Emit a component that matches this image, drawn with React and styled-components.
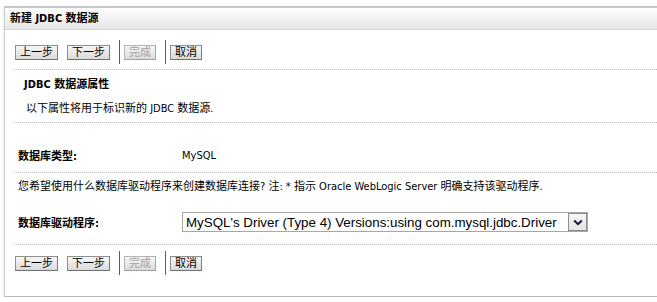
import React from "react";
import styled, { createGlobalStyle } from "styled-components";

const Global = createGlobalStyle`
  html, body { margin: 0; padding: 0; background: #fff; }
  body {
    font-family: Tahoma, "DejaVu Sans Condensed", "Liberation Sans", "Noto Sans CJK SC", sans-serif;
    font-size: 11px;
    color: #000;
  }
`;

const Panel = styled.div`
  margin: 6px 0 0 4px;
  border-top: 2px solid #c3c8cc;
  border-left: 1px solid #cdd0d2;
  border-bottom: 1px solid #b8b8b8;
  box-shadow: 0 2px 1px #a8a8a8;
  padding-bottom: 21px;
`;

const TitleBar = styled.div`
  height: 21px;
  line-height: 21px;
  padding-left: 5px;
  background: linear-gradient(to bottom, #ffffff 0%, #f3f3f3 45%, #e6e6e6 100%);
  border-bottom: 1px solid #d6d6d6;
  font-weight: bold;
  font-size: 11px;
`;

const Content = styled.div`
  padding-left: 9px;
`;

const Section = styled.div`
  padding: ${(p) => p.$pt || 0}px 0 ${(p) => p.$pb || 0}px;
  border-bottom: ${(p) => (p.$noline ? "none" : "1px dotted #b9b9b9")};
`;

const ButtonBar = styled.div`
  display: flex;
  align-items: center;
  height: 24px;
  padding-left: 1px;
`;

const Button = styled.button`
  height: 15px;
  padding: 0 4px;
  margin: 0 9px 0 0;
  font-family: inherit;
  font-size: 11px;
  line-height: 13px;
  color: ${(p) => (p.disabled ? "#a3a3a3" : "#000")};
  background: linear-gradient(to bottom, #f6f6f6 0%, #e9e9e9 50%, #dadada 100%);
  border: 1px solid ${(p) => (p.disabled ? "#b4b4b4" : "#8f8f8f")};
  border-bottom-color: ${(p) => (p.disabled ? "#a0a0a0" : "#6f6f6f")};
  border-right-color: ${(p) => (p.disabled ? "#a8a8a8" : "#7a7a7a")};
  border-radius: 0;
  cursor: default;
`;

const Separator = styled.span`
  width: 1px;
  height: 24px;
  background: #5e5e5e;
  margin-right: 4px;
`;

const Heading = styled.div`
  font-weight: bold;
  line-height: 14px;
  padding-left: 10px;
`;

const Description = styled.div`
  line-height: 14px;
  padding-left: 12px;
  margin-top: 10px;
`;

const Row = styled.div`
  display: flex;
  align-items: center;
  height: ${(p) => p.$h || 14}px;
  margin-top: ${(p) => p.$mt || 0}px;
  padding-left: 4px;
`;

const Label = styled.div`
  width: 164px;
  font-weight: bold;
  flex: none;
`;

const Value = styled.div``;

const Note = styled.div`
  line-height: 14px;
  padding-left: 4px;
`;

const Select = styled.div`
  width: 404px;
  height: 18px;
  border: 1px solid #a7a7a7;
  display: flex;
  align-items: center;
  justify-content: space-between;
  background: #fff;
`;

const SelectText = styled.span`
  font-family: "Liberation Sans", Arial, sans-serif;
  font-size: 13.33px;
  padding-left: 3px;
  color: #000;
  white-space: nowrap;
`;

const ArrowBox = styled.span`
  width: 17px;
  height: 16px;
  border: 1px solid #8d8d8d;
  background: linear-gradient(to bottom, #f7f7f7, #e4e4e4);
  display: flex;
  align-items: center;
  justify-content: center;
`;

function Buttons() {
  return (
    <ButtonBar>
      <Button>上一步</Button>
      <Button>下一步</Button>
      <Separator />
      <Button disabled>完成</Button>
      <Separator />
      <Button>取消</Button>
    </ButtonBar>
  );
}

export default function App() {
  return (
    <>
      <Global />
      <Panel>
        <TitleBar>新建 JDBC 数据源</TitleBar>
        <Content>
          <Section $pt={10} $pb={5}>
            <Buttons />
          </Section>
          <Section $pt={8} $pb={6}>
            <Heading>JDBC 数据源属性</Heading>
            <Description>以下属性将用于标识新的 JDBC 数据源.</Description>
          </Section>
          <Section $pt={25} $pb={10}>
            <Row>
              <Label>数据库类型:</Label>
              <Value>MySQL</Value>
            </Row>
          </Section>
          <Section $pt={7} $pb={12}>
            <Note>
              您希望使用什么数据库驱动程序来创建数据库连接? 注: * 指示 Oracle WebLogic Server 明确支持该驱动程序.
            </Note>
            <Row $h={20} $mt={18}>
              <Label>数据库驱动程序:</Label>
              <Select>
                <SelectText>MySQL's Driver (Type 4) Versions:using com.mysql.jdbc.Driver</SelectText>
                <ArrowBox>
                  <svg width="10" height="7" viewBox="0 0 10 7">
                    <path d="M1.2 1.5 L5 5.2 L8.8 1.5" fill="none" stroke="#14183a" strokeWidth="2" />
                  </svg>
                </ArrowBox>
              </Select>
            </Row>
          </Section>
          <Section $pt={6} $noline>
            <Buttons />
          </Section>
        </Content>
      </Panel>
    </>
  );
}
